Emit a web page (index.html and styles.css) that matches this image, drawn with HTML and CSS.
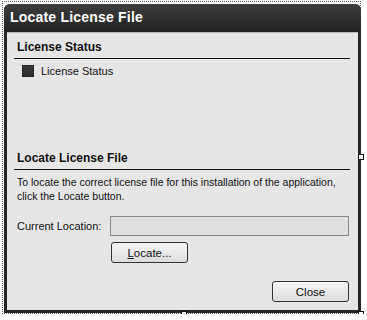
FILE: index.html
```html
<!DOCTYPE html>
<html lang="en">
<head>
    <meta charset="UTF-8">
    <title>Locate License File</title>
    <link rel="stylesheet" href="styles.css">
</head>
<body>
    <div class="frame">
        <div class="window">
            <div class="titlebar">Locate License File</div>
            <div class="client">
                <div class="group">
                    <h2 class="group-title">License Status</h2>
                    <div class="status">
                        <span class="swatch"></span>
                        <span>License Status</span>
                    </div>
                </div>

                <div class="group locate">
                    <h2 class="group-title">Locate License File</h2>
                    <p class="hint">To locate the correct license file for this installation of the application, click the Locate button.</p>
                    <div class="row">
                        <label for="location">Current Location:</label>
                        <input type="text" id="location" disabled>
                    </div>
                    <div class="row">
                        <span class="spacer"></span>
                        <button class="btn"><u>L</u>ocate...</button>
                    </div>
                </div>

                <div class="footer">
                    <button class="btn">Close</button>
                </div>
            </div>
        </div>
        <span class="handle handle-right"></span>
        <span class="handle handle-bottom"></span>
        <span class="handle handle-corner"></span>
    </div>
</body>
</html>
```

FILE: styles.css
```css
body {
    margin: 0;
    background: #ffffff;
    font-family: "Liberation Sans", Arial, sans-serif;
    color: #111;
}

.frame {
    position: relative;
    margin: 1px 0 0 2px;
    width: 359px;
    height: 313px;
    border: 1px dotted #666;
    box-sizing: border-box;
    padding: 2px 0 0 1px;
}

.window {
    width: 357px;
    height: 309px;
    background: #262626;
    border-radius: 6px 6px 0 0;
    padding: 0 3px 3px 3px;
    box-sizing: border-box;
    display: flex;
    flex-direction: column;
}

.titlebar {
    height: 28px;
    line-height: 27px;
    color: #fff;
    font-weight: bold;
    font-size: 14px;
    background: linear-gradient(#3e3e3e, #303030 50%, #222);
    border-radius: 6px 6px 0 0;
    margin: 0 -3px;
    padding-left: 6px;
    letter-spacing: 0.2px;
}

.client {
    flex: 1;
    background: #e6e6e6;
    border-top: 1px solid #bbb;
    padding: 7px 8px 0 7px;
    display: flex;
    flex-direction: column;
    font-size: 10.5px;
}

.group-title {
    margin: 0;
    font-size: 12px;
    font-weight: bold;
    padding: 0 0 4px 3px;
    border-bottom: 1px solid #111;
    line-height: 14px;
}

.status {
    display: flex;
    align-items: center;
    gap: 7px;
    padding: 6px 0 0 8px;
    font-size: 11px;
}

.swatch {
    width: 12px;
    height: 12px;
    background: #333;
    border: 1px solid #222;
    box-sizing: border-box;
}

.locate {
    margin-top: 74px;
}

.hint {
    margin: 5px 0 0 3px;
    line-height: 14px;
}

.row {
    display: flex;
    align-items: center;
    margin-left: 3px;
}

.row:nth-of-type(1) {
    margin-top: 13px;
}

label {
    width: 93px;
    font-size: 11px;
}

input[type="text"] {
    flex: 1;
    height: 20px;
    box-sizing: border-box;
    margin: 0 1px 0 0;
    border: 1px solid #8a8a8a;
    background: #e0e0e0;
}

.spacer {
    width: 94px;
}

.btn {
    width: 77px;
    height: 21px;
    border: 1px solid #333;
    border-radius: 3px;
    background: linear-gradient(#f7f7f7, #e9e9e9 50%, #dcdcdc);
    font-family: "Liberation Sans", Arial, sans-serif;
    font-size: 11.5px;
    color: #111;
    padding: 0;
}

.row .btn {
    margin-top: 6px;
}

.footer {
    display: flex;
    justify-content: flex-end;
    margin: 18px 1px 0 0;
}

.handle {
    position: absolute;
    width: 6px;
    height: 6px;
    background: #fff;
    border: 1px solid #111;
    box-sizing: border-box;
}

.handle-right {
    right: -4px;
    top: 152px;
}

.handle-bottom {
    left: 178px;
    bottom: -4px;
}

.handle-corner {
    right: -4px;
    bottom: -4px;
}
```
